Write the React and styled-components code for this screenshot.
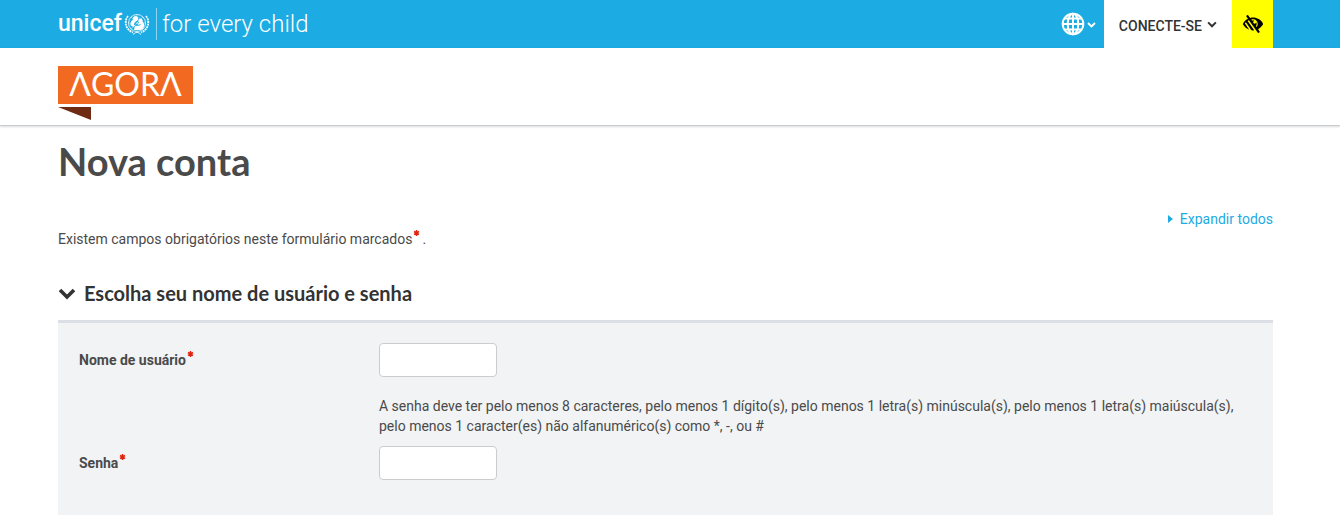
import React from 'react';
import styled, { createGlobalStyle } from 'styled-components';
import { FaLowVision } from 'react-icons/fa';

const GlobalStyle = createGlobalStyle`
  *,
  *::before,
  *::after {
    box-sizing: border-box;
  }

  body {
    margin: 0;
    background: #fff;
    color: #4a4a4a;
    font-family: Roboto, 'Liberation Sans', sans-serif;
    font-size: 14px;
    line-height: 20px;
  }

  a {
    color: #1cabe2;
    text-decoration: none;
  }

  button {
    border: 0;
    padding: 0;
    background: none;
    color: inherit;
    font: inherit;
    cursor: pointer;
  }
`;

const TopBar = styled.header`
  display: flex;
  justify-content: space-between;
  height: 48px;
  padding: 0 67px 0 58px;
  background: #1cabe2;
  color: #fff;
`;

const UnicefLink = styled.a`
  display: flex;
  align-items: center;
  color: #fff;
  font-size: 24px;
  line-height: 32px;
  white-space: nowrap;

  svg {
    margin: 0 6px 0 2px;
  }
`;

const UnicefName = styled.span`
  font-size: 23px;
  font-weight: 500;
`;

const Tagline = styled.span`
  padding-left: 5px;
  border-left: 1px solid #8ed5f1;
  font-weight: 300;
`;

const TopNav = styled.nav`
  display: flex;
`;

const LanguageButton = styled.button`
  display: flex;
  align-items: center;
  gap: 2px;
  padding-right: 8px;
`;

const LoginButton = styled.button`
  display: flex;
  align-items: center;
  gap: 5px;
  padding: 4px 15px 0;
  background: #fff;
  color: #333;
  font-weight: 500;

  svg {
    margin-bottom: 4px;
  }
`;

const ContrastButton = styled.button`
  display: flex;
  align-items: center;
  justify-content: center;
  width: 41px;
  background: #ff0;
  color: #000;
`;

const BrandBar = styled.div`
  padding: 18px 58px 5px;
  border-bottom: 1px solid #c8cdd2;
  box-shadow: 0 1px 2px rgba(0, 0, 0, 0.15);
`;

const AgoraLink = styled.a`
  display: block;
  width: 135px;

  svg {
    display: block;
  }
`;

const AgoraName = styled.span`
  display: block;
  height: 38px;
  margin-bottom: 3px;
  background: #f26a21;
  color: #fff;
  font-family: Lato, 'Open Sans', sans-serif;
  font-size: 32px;
  line-height: 36px;
  text-align: center;
`;

const Main = styled.main`
  padding: 12px 67px 5px 58px;
`;

const Title = styled.h1`
  margin: 0;
  font-family: Lato, 'Open Sans', sans-serif;
  font-size: 38px;
  font-weight: 700;
  line-height: 46px;
`;

const ExpandRow = styled.div`
  display: flex;
  justify-content: flex-end;
  margin-top: 25px;

  a {
    display: flex;
    align-items: center;
    gap: 7px;
  }
`;

const Notice = styled.p`
  margin: 0;
`;

const Star = styled.span`
  display: inline-block;
  padding: 0 2px 0 1px;
  vertical-align: top;

  svg {
    display: block;
  }
`;

const SectionTitle = styled.h2`
  margin: 31px 0 14px;
  color: #333;
  font-family: Lato, 'Open Sans', sans-serif;
  font-size: 20px;
  font-weight: 700;
  line-height: 26px;

  button {
    display: flex;
    align-items: center;
    gap: 8px;
  }
`;

const Panel = styled.div`
  display: grid;
  grid-template-columns: 300px 1fr;
  align-items: center;
  padding: 20px 21px 35px;
  border-top: 3px solid #dcdfe5;
  background: #f1f3f5;
`;

const Label = styled.label`
  font-weight: 700;
`;

const Field = styled.input`
  width: 118px;
  height: 34px;
  padding: 6px 12px;
  border: 1px solid #ccc;
  border-radius: 4px;
  background: #fff;
  font: inherit;
`;

const Hint = styled.p`
  grid-column: 2;
  margin: 19px 0 10px;
`;

const Required = () => (
  <Star>
    <svg width="7" height="8" viewBox="0 0 7 8" role="img" aria-label="Obrigatório">
      <path d="M3.5 1v6M1 2.5l5 3M6 2.5l-5 3" stroke="#e1230f" strokeWidth="1.5" />
    </svg>
  </Star>
);

const Chevron = ({ size }) => (
  <svg width={size} height={size} viewBox="0 0 18 18" fill="none" aria-hidden="true">
    <path d="M2 6l7 7 7-7" stroke="currentColor" strokeWidth="3.6" />
  </svg>
);

const UnicefEmblem = () => (
  <svg width="26" height="24" viewBox="0 0 26 24" fill="none" stroke="#fff" aria-hidden="true">
    <circle cx="13" cy="11" r="8.5" strokeWidth="0.8" />
    <circle cx="13" cy="11" r="5.5" strokeWidth="0.4" />
    <path d="M13 2.5v17M4.5 11h17M7 5l12 12M19 5L7 17" strokeWidth="0.4" />
    <path d="M4 4C0 9 1 17 9 20.5M22 4c4 5 3 13-5 16.5" strokeWidth="1.8" strokeDasharray="2 0.7" />
    <path d="M9 22.5c2-2 3-2 4-2s2 0 4 2" strokeWidth="1" />
    <circle cx="11.5" cy="6.5" r="2.6" fill="#fff" stroke="none" />
    <circle cx="16.5" cy="8.8" r="2.2" fill="#fff" stroke="none" />
    <path
      d="M9.5 7.5C7 9 5.8 11.5 6.8 13.5c1.2 1.3 2.7 1 4.2.5L10 18h7c2.5-1.5 3.5-3.5 3-6-.3-1.3-1-2-2-2.5l-3 1c-1 1.5-1 3-2.5 3.5-1.5.2-2.5-.8-2.5-2s1-2 2-2.5z"
      fill="#fff"
      stroke="none"
    />
    <path d="M13.5 8.5l-2 3c.5 2 3 2.5 5 1" stroke="#1cabe2" strokeWidth="1" />
  </svg>
);

const Globe = () => (
  <svg width="24" height="24" viewBox="0 0 24 24" fill="none" stroke="#fff" strokeWidth="2" aria-hidden="true">
    <circle cx="12" cy="12" r="10.3" />
    <ellipse cx="12" cy="12" rx="5.3" ry="10.3" />
    <path d="M12 2v20M2 12h20M4 6.5h16M4 17.5h16" />
  </svg>
);

const fields = [
  { id: 'username', label: 'Nome de usuário', type: 'text' },
  {
    id: 'password',
    label: 'Senha',
    type: 'password',
    hint: 'A senha deve ter pelo menos 8 caracteres, pelo menos 1 dígito(s), pelo menos 1 letra(s) minúscula(s), pelo menos 1 letra(s) maiúscula(s), pelo menos 1 caracter(es) não alfanumérico(s) como *, -, ou #',
  },
];

const App = () => (
  <>
    <GlobalStyle />
    <TopBar>
      <UnicefLink href="#unicef">
        <UnicefName>unicef</UnicefName>
        <UnicefEmblem />
        <Tagline>for every child</Tagline>
      </UnicefLink>
      <TopNav>
        <LanguageButton type="button" aria-label="Idioma">
          <Globe />
          <Chevron size={9} />
        </LanguageButton>
        <LoginButton type="button">
          CONECTE-SE
          <Chevron size={10} />
        </LoginButton>
        <ContrastButton type="button" aria-label="Alto contraste">
          <FaLowVision size={20} />
        </ContrastButton>
      </TopNav>
    </TopBar>

    <BrandBar>
      <AgoraLink href="#agora" aria-label="AGORA">
        <AgoraName>ΛGORΛ</AgoraName>
        <svg width="33" height="13" viewBox="0 0 33 13" aria-hidden="true">
          <path d="M0 0h33v13z" fill="#6e2a12" />
        </svg>
      </AgoraLink>
    </BrandBar>

    <Main>
      <Title>Nova conta</Title>
      <ExpandRow>
        <a href="#expandir">
          <svg width="5" height="8" viewBox="0 0 5 8" aria-hidden="true">
            <path d="M0 0l5 4-5 4z" fill="#1cabe2" />
          </svg>
          Expandir todos
        </a>
      </ExpandRow>
      <Notice>
        Existem campos obrigatórios neste formulário marcados
        <Required />.
      </Notice>

      <form>
        <SectionTitle>
          <button type="button" aria-expanded="true">
            <Chevron size={18} />
            Escolha seu nome de usuário e senha
          </button>
        </SectionTitle>
        <Panel>
          {fields.map(({ id, label, type, hint }) => (
            <React.Fragment key={id}>
              {hint && <Hint id={`${id}-hint`}>{hint}</Hint>}
              <Label htmlFor={id}>
                {label}
                <Required />
              </Label>
              <Field id={id} type={type} aria-describedby={hint && `${id}-hint`} />
            </React.Fragment>
          ))}
        </Panel>
      </form>
    </Main>
  </>
);

export default App;
